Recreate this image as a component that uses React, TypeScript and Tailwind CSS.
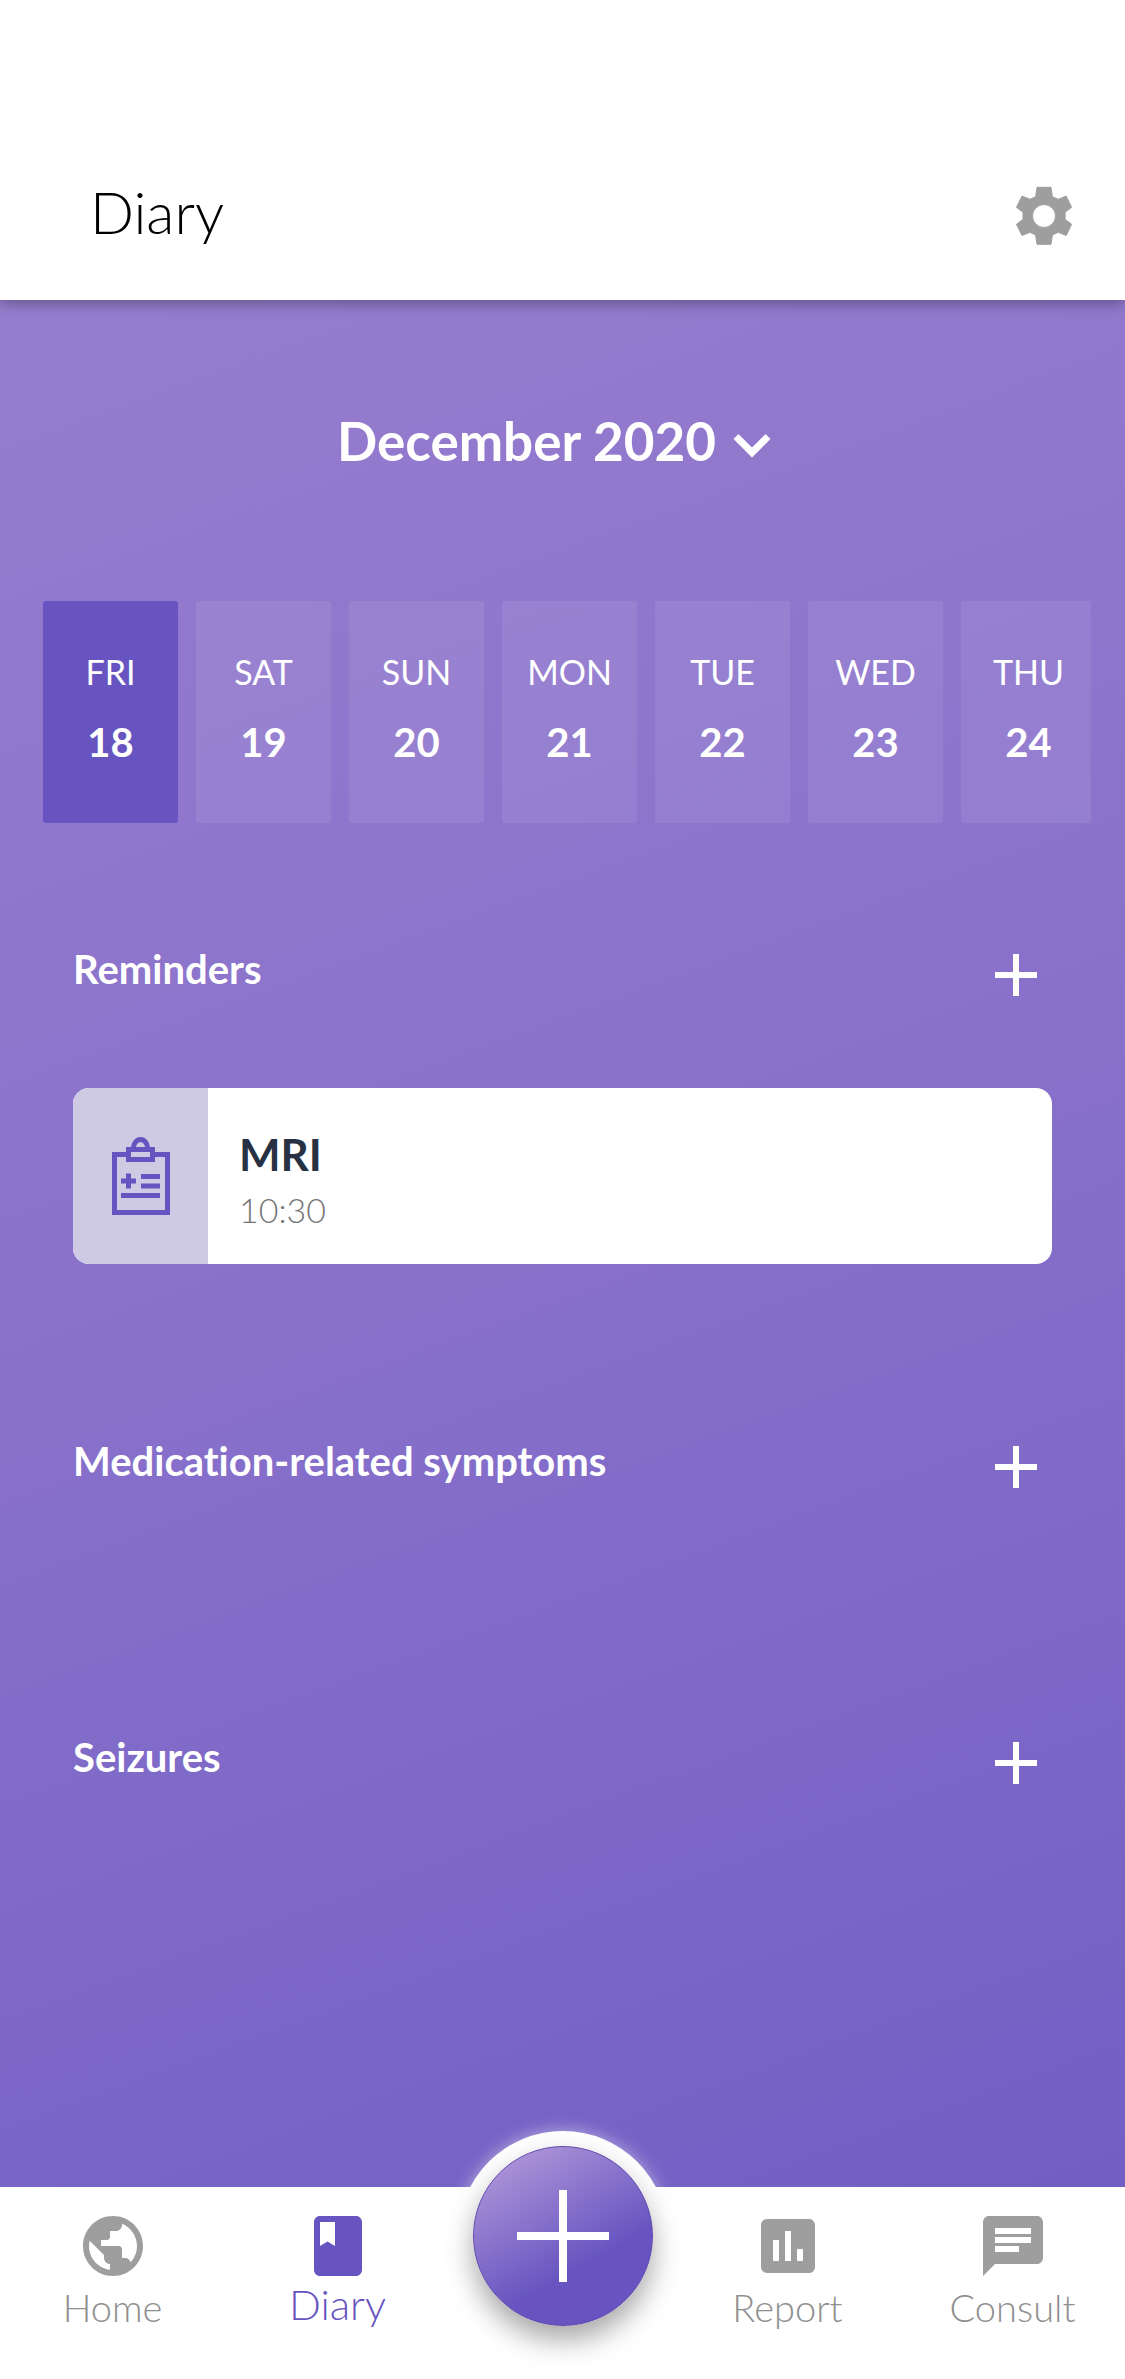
import React from "react";
import { MdAdd, MdChat, MdClass, MdInsertChart, MdPublic } from "react-icons/md";

const days = [
  { name: "FRI", date: 18 },
  { name: "SAT", date: 19 },
  { name: "SUN", date: 20 },
  { name: "MON", date: 21 },
  { name: "TUE", date: 22 },
  { name: "WED", date: 23 },
  { name: "THU", date: 24 },
];

function GearIcon() {
  return (
    <svg viewBox="0 0 72 72" className="size-[72px]" aria-hidden="true">
      <path
        fill="currentColor"
        stroke="currentColor"
        strokeLinejoin="round"
        fillRule="evenodd"
        d="M29 7.300h14l1.400 9.400 5.800 2.600 8-3.200 5.400 11.200-6.500 5v7l6.500 5-5.400 11.200-8-3.200-5.800 2.600L43 64.300H29l-1.400-9.400-5.600-2.600-8 3.200-5.500-11.200 6.500-5v-7l-6.500-5L14 16.100l8 3.200 5.600-2.600zM36 24.500a11.500 11.500 0 1 0 0 23 11.500 11.500 0 0 0 0-23z"
      />
    </svg>
  );
}

function ChevronIcon() {
  return (
    <svg viewBox="0 0 72 72" className="mt-2 size-[72px]" fill="none" stroke="currentColor" strokeWidth="7" aria-hidden="true">
      <path d="M20 27.500 36 43.500l16-16" />
    </svg>
  );
}

function ClipboardIcon() {
  return (
    <svg viewBox="0 0 58 78" className="h-[78px] w-[58px]" fill="none" stroke="currentColor" strokeWidth="5" aria-hidden="true">
      <path d="M14 17.500H2.500v58h53v-58H43" />
      <path d="M16.500 12.500h24v10h-24z" />
      <path d="M21.500 11a7 8.500 0 0 1 14 0" />
      <path d="M9 44h15M16.500 36.500v15M29 39.500h19M29 49h19M9 58.500h39" />
    </svg>
  );
}

function Section({ title, children }: { title: string; children?: React.ReactNode }) {
  return (
    <section>
      <div className="flex items-start justify-between">
        <h2 className="text-[40px] leading-[60px] font-bold">{title}</h2>
        <button type="button" aria-label={`Add to ${title}`} className="cursor-pointer">
          <MdAdd className="size-[72px]" />
        </button>
      </div>
      {children}
    </section>
  );
}

function NavLink({ label, icon, active = false }: { label: string; icon: React.ReactNode; active?: boolean }) {
  return (
    <a
      href={`#${label.toLowerCase()}`}
      aria-current={active ? "page" : undefined}
      className={
        active
          ? "flex flex-col items-center text-[42px] leading-[44px] font-light text-[#6754c0]"
          : "flex flex-col items-center text-[38px] leading-[50px] font-light text-[#8f8f8f]"
      }
    >
      <span className={active ? "" : "text-[#9e9e9e]"}>{icon}</span>
      {label}
    </a>
  );
}

export default function App() {
  return (
    <div className="flex min-h-screen flex-col bg-linear-160 from-[#9a80cf] via-[#8971cb] to-[#6e5cc3] font-['Lato',sans-serif] text-white [font-variant-ligatures:none]">
      <header className="flex items-start justify-between bg-white pt-[180px] pr-[45px] pb-12 pl-[90px] text-black shadow-[0_3px_14px_rgba(0,0,0,0.35)]">
        <h1 className="text-[58px] leading-[64px] font-light">Diary</h1>
        <button type="button" aria-label="Settings" className="cursor-pointer text-[#9e9e9e]">
          <GearIcon />
        </button>
      </header>

      <main className="flex grow flex-col pt-[101px]">
        <button type="button" className="flex cursor-pointer items-center self-center text-[53px] leading-[72px] font-bold">
          December 2020
          <ChevronIcon />
        </button>

        <ol className="mt-[120px] mr-[34px] ml-[43px] flex gap-[18px] overflow-hidden">
          {days.map((day, i) => (
            <li key={day.name} className="shrink-0">
              <button
                type="button"
                aria-pressed={i === 0}
                className={
                  i === 0
                    ? "flex h-[222px] w-[135px] cursor-pointer flex-col items-center rounded-[3px] bg-[#6754c0] pt-[47px]"
                    : "flex h-[222px] w-[135px] cursor-pointer flex-col items-center rounded-[3px] bg-white/8 pt-[47px]"
                }
              >
                <span className="text-[34px] leading-[48px]">{day.name}</span>
                <span className="mt-4 text-[40px] leading-[60px] font-bold">{day.date}</span>
              </button>
            </li>
          ))}
        </ol>

        <div className="flex flex-col pt-[116px] pr-[73px] pl-[73px]">
          <Section title="Reminders">
            <article className="mt-[77px] flex h-[176px] overflow-hidden rounded-2xl bg-white">
              <div className="flex w-[135px] items-center justify-center bg-[#cfcae4] text-[#6754c0]">
                <ClipboardIcon />
              </div>
              <div className="flex flex-col justify-center pt-3 pl-[31px]">
                <h3 className="text-[44px] leading-[48px] font-bold text-[#263143]">MRI</h3>
                <time className="mt-2 text-[34px] leading-[48px] font-light text-[#757575]">10:30</time>
              </div>
            </article>
          </Section>
        </div>
        <div className="flex flex-col gap-[224px] pt-[167px] pr-[73px] pb-[224px] pl-[73px]">
          <Section title="Medication-related symptoms" />
          <Section title="Seizures" />
        </div>
      </main>

      <nav className="relative grid h-48 grid-cols-5 bg-white pt-[23px]">
        <NavLink label="Home" icon={<MdPublic className="size-[72px]" />} />
        <NavLink label="Diary" icon={<MdClass className="size-[72px]" />} active />
        <div className="relative">
          <button
            type="button"
            aria-label="Add entry"
            className="absolute -top-[79px] left-1/2 flex size-[210px] -translate-x-1/2 cursor-pointer items-center justify-center rounded-full bg-white shadow-[0_0_16px_rgba(255,255,255,0.5)]"
          >
            <span className="flex size-[180px] items-center justify-center rounded-full border border-[#6249ae] bg-linear-150 from-[#bc9edb] to-[#6754c0] to-65% shadow-[0_14px_28px_rgba(0,0,0,0.35)]">
              <svg viewBox="0 0 92 92" className="size-[92px]" stroke="currentColor" strokeWidth="8" aria-hidden="true">
                <path d="M0 46h92M46 0v92" />
              </svg>
            </span>
          </button>
        </div>
        <NavLink label="Report" icon={<MdInsertChart className="size-[72px]" />} />
        <NavLink label="Consult" icon={<MdChat className="size-[72px]" />} />
      </nav>
    </div>
  );
}
